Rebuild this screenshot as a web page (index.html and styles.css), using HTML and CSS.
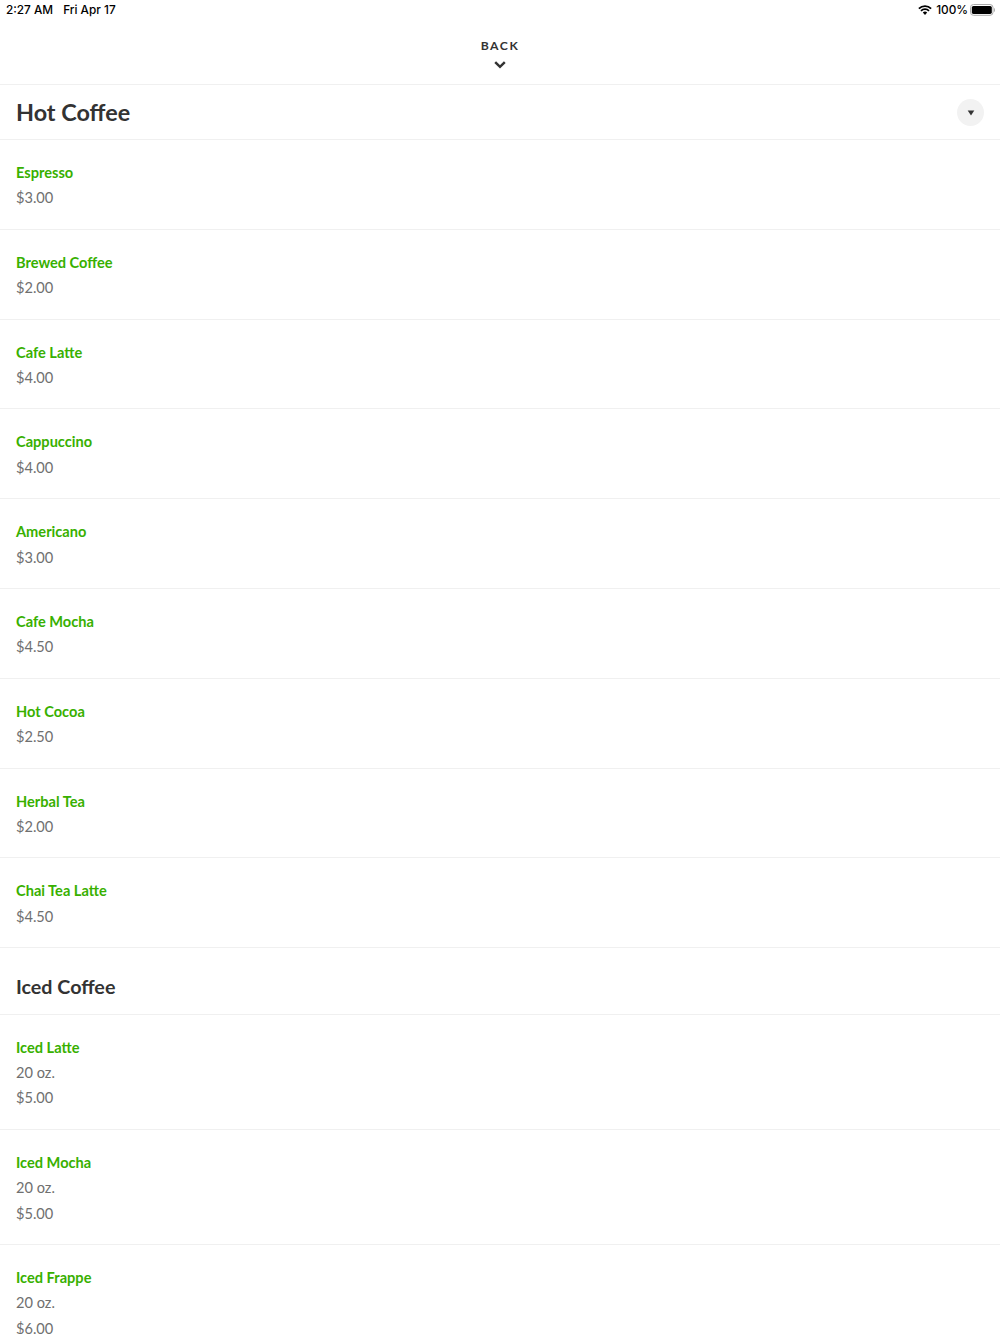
FILE: index.html
```html
<!DOCTYPE html>
<html lang="en">
<head>
<meta charset="utf-8">
<title>Menu</title>
<link rel="stylesheet" href="styles.css">
</head>
<body>
<div class="screen">
<header class="status">
<div class="status-left"><span>2:27 AM</span><span>Fri Apr 17</span></div>
<div class="status-right">
<svg class="wifi" viewBox="0 0 14 10" width="14" height="10"><path d="M.9 3.6a8.6 8.6 0 0 1 12.2 0M3 5.8a5.7 5.7 0 0 1 8 0" fill="none" stroke="#000" stroke-width="1.8"/><path d="M4.8 7.6a3.1 3.1 0 0 1 4.4 0L7 9.9z"/></svg>
<span class="percent">100%</span>
<svg class="battery" viewBox="0 0 25 12" width="25" height="12"><rect x=".5" y=".5" width="22.500" height="10.800" rx="3" fill="none" stroke="#aaa"/><rect x="1.800" y="1.900" width="20" height="8" rx="1.6"/><path d="M24 4v4c1.300-.7 1.300-3.300 0-4z" fill="#aaa"/></svg>
</div>
</header>
<nav class="back"><span>BACK</span><svg viewBox="0 0 12 8" width="12" height="8"><path d="M1.200 1.200 6 5.800l4.800-4.600" fill="none" stroke="#333" stroke-width="2.500"/></svg></nav>
<div class="category"><h1>Hot Coffee</h1><button class="toggle" aria-label="Categories"><svg viewBox="0 0 8 6" width="8" height="6"><path d="M.7.5h6.600L4 5.500z" fill="#333"/></svg></button></div>
<main>
<article class="item"><h3>Espresso</h3><p>$3.00</p></article>
<article class="item"><h3>Brewed Coffee</h3><p>$2.00</p></article>
<article class="item"><h3>Cafe Latte</h3><p>$4.00</p></article>
<article class="item"><h3>Cappuccino</h3><p>$4.00</p></article>
<article class="item"><h3>Americano</h3><p>$3.00</p></article>
<article class="item"><h3>Cafe Mocha</h3><p>$4.50</p></article>
<article class="item"><h3>Hot Cocoa</h3><p>$2.50</p></article>
<article class="item"><h3>Herbal Tea</h3><p>$2.00</p></article>
<article class="item"><h3>Chai Tea Latte</h3><p>$4.50</p></article>
<h2 class="section">Iced Coffee</h2>
<article class="item"><h3>Iced Latte</h3><p>20 oz.</p><p>$5.00</p></article>
<article class="item"><h3>Iced Mocha</h3><p>20 oz.</p><p>$5.00</p></article>
<article class="item"><h3>Iced Frappe</h3><p>20 oz.</p><p>$6.00</p></article>
</main>
</div>
</body>
</html>
```
FILE: styles.css
```css
* { box-sizing: border-box; }
body { margin: 0; background: #fff; color: #333; font-family: Lato, sans-serif; }
h1, h2, h3, p { margin: 0; }
.screen { height: 1334px; overflow: hidden; }
.status { height: 20px; padding: 0 5px 0 6px; display: flex; justify-content: space-between; align-items: center; font: 500 11.800px/20px Inter, sans-serif; color: #000; }
.status-left { display: flex; gap: 10px; }
.status-right { display: flex; align-items: center; }
.percent { margin: 0 2px 0 4px; }
.back { height: 65px; padding-top: 18px; border-bottom: 1px solid #f0f0f0; display: flex; flex-direction: column; align-items: center; font-weight: 700; font-size: 12.200px; line-height: 16px; letter-spacing: 1.500px; }
.back svg { margin: 6.500px 1px 0 0; }
.category { height: 55px; padding: 0 16px; border-bottom: 1px solid #f0f0f0; display: flex; align-items: center; justify-content: space-between; }
h1 { font-size: 23.400px; line-height: 30px; font-weight: 700; }
.toggle { width: 27px; height: 27px; padding: 1px 0 0; border: 0; border-radius: 50%; background: #f2f2f2; display: flex; align-items: center; justify-content: center; }
.item { padding: 20px 16px 18.020px; border-bottom: 1px solid #f0f0f0; font-size: 14.600px; line-height: 25.390px; }
.item h3 { font-size: 14.600px; line-height: 25.390px; font-weight: 700; color: #38b000; }
.item p { color: #707070; }
.section { height: 66.500px; padding: 13px 16px 0; border-bottom: 1px solid #f0f0f0; font-size: 19.700px; line-height: 52px; font-weight: 700; }
```
